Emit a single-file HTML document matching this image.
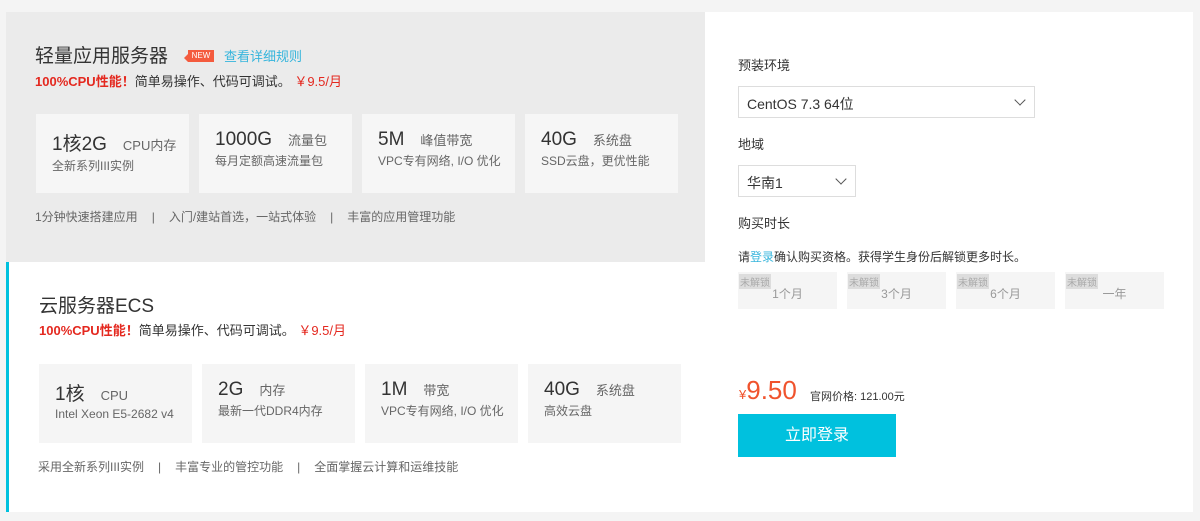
<!DOCTYPE html><html><head><meta charset="utf-8"><style>
*{margin:0;padding:0;box-sizing:border-box}
body{width:1200px;height:521px;background:#f4f4f4;font-family:"Liberation Sans","Noto Sans CJK SC",sans-serif;position:relative;overflow:hidden;color:#333}
.a{position:absolute}
.top{left:6px;top:12px;width:699px;height:250px;background:#ebebeb}
.bot{left:6px;top:262px;width:699px;height:250px;background:#fff;border-left:3px solid #00c1de}
.right{left:705px;top:12px;width:488px;height:500px;background:#fff}
.t{font-size:19px;color:#333}
.s{font-size:13px;color:#333}
.s b{color:#e4281f}
.s i{font-style:normal;color:#e4281f}
.box{position:absolute;width:153px;height:79px;background:#f5f5f5;padding:15px 0 0 16px}
.top .box{background:#f6f6f6}
.big{font-size:19px;color:#333}
.big span{font-size:13px;color:#666;margin-left:16px}
.sm{font-size:12px;color:#666;margin-top:1px}
.f{font-size:12px;color:#666}
.f span{margin:0 14px}
.lab{font-size:13px;color:#333}
.sel{border:1px solid #ddd;height:32px;font-size:14px;padding:7px 8px;color:#333}
.chev{position:absolute;right:10px;top:9px;width:8px;height:8px;border-right:1.5px solid #555;border-bottom:1.5px solid #555;transform:rotate(45deg)}
.dur{position:absolute;top:272px;width:99px;height:37px;background:#f5f5f5;font-size:12px;color:#999}
.dur em{position:absolute;left:1px;top:2px;font-style:normal;font-size:10px;background:#ddd;color:#aaa;padding:0 1px}
.dur span{position:absolute;top:13px;left:0;width:100%;text-align:center}
</style></head><body>
<div class="a top">
 <div class="a t" style="left:29px;top:29px">轻量应用服务器</div>
 <div class="a" style="left:182px;top:38px;width:26px;height:12px;background:#f45b3e;color:#fff;font-size:8px;line-height:12px;text-align:center">NEW</div>
 <div class="a" style="left:178px;top:42px;width:0;height:0;border:4px solid transparent;border-right-color:#f45b3e;border-left:0"></div>
 <div class="a" style="left:218px;top:34px;font-size:13px;color:#36b5dc">查看详细规则</div>
 <div class="a s" style="left:29px;top:59px"><b>100%CPU性能！</b>简单易操作、代码可调试。 <i>￥9.5/月</i></div>
 <div class="box" style="left:30px;top:102px"><div class="big">1核2G<span>CPU内存</span></div><div class="sm">全新系列III实例</div></div>
 <div class="box" style="left:193px;top:102px"><div class="big">1000G<span>流量包</span></div><div class="sm">每月定额高速流量包</div></div>
 <div class="box" style="left:356px;top:102px"><div class="big">5M<span>峰值带宽</span></div><div class="sm">VPC专有网络, I/O 优化</div></div>
 <div class="box" style="left:519px;top:102px"><div class="big">40G<span>系统盘</span></div><div class="sm">SSD云盘，更优性能</div></div>
 <div class="a f" style="left:29px;top:196px">1分钟快速搭建应用<span>|</span>入门/建站首选，一站式体验<span>|</span>丰富的应用管理功能</div>
</div>
<div class="a bot">
 <div class="a t" style="left:30px;top:29px">云服务器ECS</div>
 <div class="a s" style="left:30px;top:58px"><b>100%CPU性能！</b>简单易操作、代码可调试。 <i>￥9.5/月</i></div>
 <div class="box" style="left:30px;top:102px"><div class="big">1核<span>CPU</span></div><div class="sm">Intel Xeon E5-2682 v4</div></div>
 <div class="box" style="left:193px;top:102px"><div class="big">2G<span>内存</span></div><div class="sm">最新一代DDR4内存</div></div>
 <div class="box" style="left:356px;top:102px"><div class="big">1M<span>带宽</span></div><div class="sm">VPC专有网络, I/O 优化</div></div>
 <div class="box" style="left:519px;top:102px"><div class="big">40G<span>系统盘</span></div><div class="sm">高效云盘</div></div>
 <div class="a f" style="left:29px;top:196px">采用全新系列III实例<span>|</span>丰富专业的管控功能<span>|</span>全面掌握云计算和运维技能</div>
</div>
<div class="a right"></div>
<div class="a lab" style="left:738px;top:55px">预装环境</div>
<div class="a sel" style="left:738px;top:86px;width:297px">CentOS 7.3 64位<div class="chev"></div></div>
<div class="a lab" style="left:738px;top:134px">地域</div>
<div class="a sel" style="left:738px;top:165px;width:118px">华南1<div class="chev"></div></div>
<div class="a lab" style="left:738px;top:213px">购买时长</div>
<div class="a" style="left:738px;top:248px;font-size:12px;color:#333">请<span style="color:#36b5dc">登录</span>确认购买资格。获得学生身份后解锁更多时长。</div>
<div class="dur" style="left:738px"><em>未解锁</em><span>1个月</span></div>
<div class="dur" style="left:847px"><em>未解锁</em><span>3个月</span></div>
<div class="dur" style="left:956px"><em>未解锁</em><span>6个月</span></div>
<div class="dur" style="left:1065px"><em>未解锁</em><span>一年</span></div>
<div class="a" style="left:739px;top:375px;color:#f0532d"><span style="font-size:13px">¥</span><span style="font-size:26px">9.50</span></div>
<div class="a" style="left:810px;top:388px;font-size:11px;color:#333">官网价格: 121.00元</div>
<div class="a" style="left:738px;top:414px;width:158px;height:43px;background:#00c1de;color:#fff;font-size:16px;text-align:center;line-height:43px">立即登录</div>
</body></html>
